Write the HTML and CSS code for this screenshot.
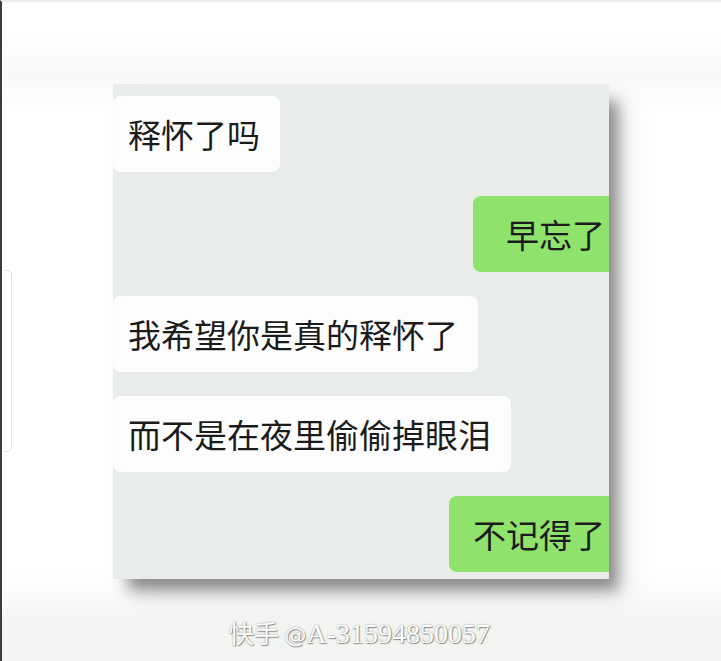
FILE: index.html
```html
<!DOCTYPE html>
<html lang="zh">
<head>
<meta charset="utf-8">
<link rel="stylesheet" href="styles.css">
</head>
<body>
<div class="page">
  <div class="handle"></div>
  <div class="card">
    <div class="row row-in"><div class="bubble bubble-in">释怀了吗</div></div>
    <div class="row row-out"><div class="bubble bubble-out bubble-out-wide">早忘了</div></div>
    <div class="row row-in"><div class="bubble bubble-in">我希望你是真的释怀了</div></div>
    <div class="row row-in"><div class="bubble bubble-in">而不是在夜里偷偷掉眼泪</div></div>
    <div class="row row-out"><div class="bubble bubble-out">不记得了</div></div>
  </div>
  <div class="watermark"><span class="wm-cjk">快手</span> <span class="wm-at">@</span><span class="wm-id">A-31594850057</span></div>
</div>
</body>
</html>
```
FILE: styles.css
```css
html, body {
  margin: 0;
  padding: 0;
  background: #ffffff;
}
body {
  width: 721px;
  height: 661px;
  overflow: hidden;
}
.page {
  position: relative;
  box-sizing: border-box;
  width: 721px;
  height: 661px;
  border-left: 2px solid #3c3c3c;
  border-top: 2px solid #ececec;
  background: linear-gradient(180deg, #ffffff 0px, #ffffff 30px, #f7f8f7 72px, #ffffff 110px, #ffffff 570px, #f2f4f2 625px, #f3f5f3 661px);
  display: flex;
  flex-direction: column;
  align-items: flex-start;
  font-family: "Noto Sans CJK SC", "Noto Sans", sans-serif;
}
.handle {
  position: absolute;
  left: 3px;
  top: 268px;
  width: 6px;
  height: 180px;
  border: 1px solid #e2e2e2;
  border-left: none;
  border-radius: 0 5px 5px 0;
}
.card {
  margin-top: 82px;
  margin-left: 111px;
  width: 496px;
  height: 495px;
  box-sizing: border-box;
  padding: 12px 0 9px;
  background: #e9ede9;
  overflow: hidden;
  display: flex;
  flex-direction: column;
  gap: 24px;
  box-shadow: 12px 14px 14px -3px rgba(0, 0, 0, 0.42), 18px 18px 30px rgba(0, 0, 0, 0.08);
}
.row {
  display: flex;
}
.row-in {
  justify-content: flex-start;
}
.row-out {
  justify-content: flex-end;
}
.bubble {
  height: 76px;
  line-height: 76px;
  font-size: 33px;
  color: #1b1b1b;
  border-radius: 8px;
  white-space: nowrap;
  box-sizing: border-box;
}
.bubble-in {
  background: #fdfdfd;
  padding: 0 20px 0 15px;
}
.bubble-out {
  background: #8fe26b;
  padding: 0 10px 0 24px;
  margin-right: -6px;
}
.bubble-out-wide {
  padding-left: 33px;
}
.watermark {
  align-self: center;
  margin-top: 38px;
  margin-left: -4px;
  color: #ffffff;
  font-size: 25px;
  line-height: 30px;
  text-shadow: 1px 1px 1px rgba(0, 0, 0, 0.35), 0 0 2px rgba(0, 0, 0, 0.4);
  white-space: nowrap;
}
.wm-cjk {
  font-family: "Noto Sans CJK SC", sans-serif;
}
.wm-at {
  font-family: "DejaVu Sans", sans-serif;
  font-size: 22px;
}
.wm-id {
  font-family: "Liberation Serif", serif;
  font-size: 28px;
}
```
